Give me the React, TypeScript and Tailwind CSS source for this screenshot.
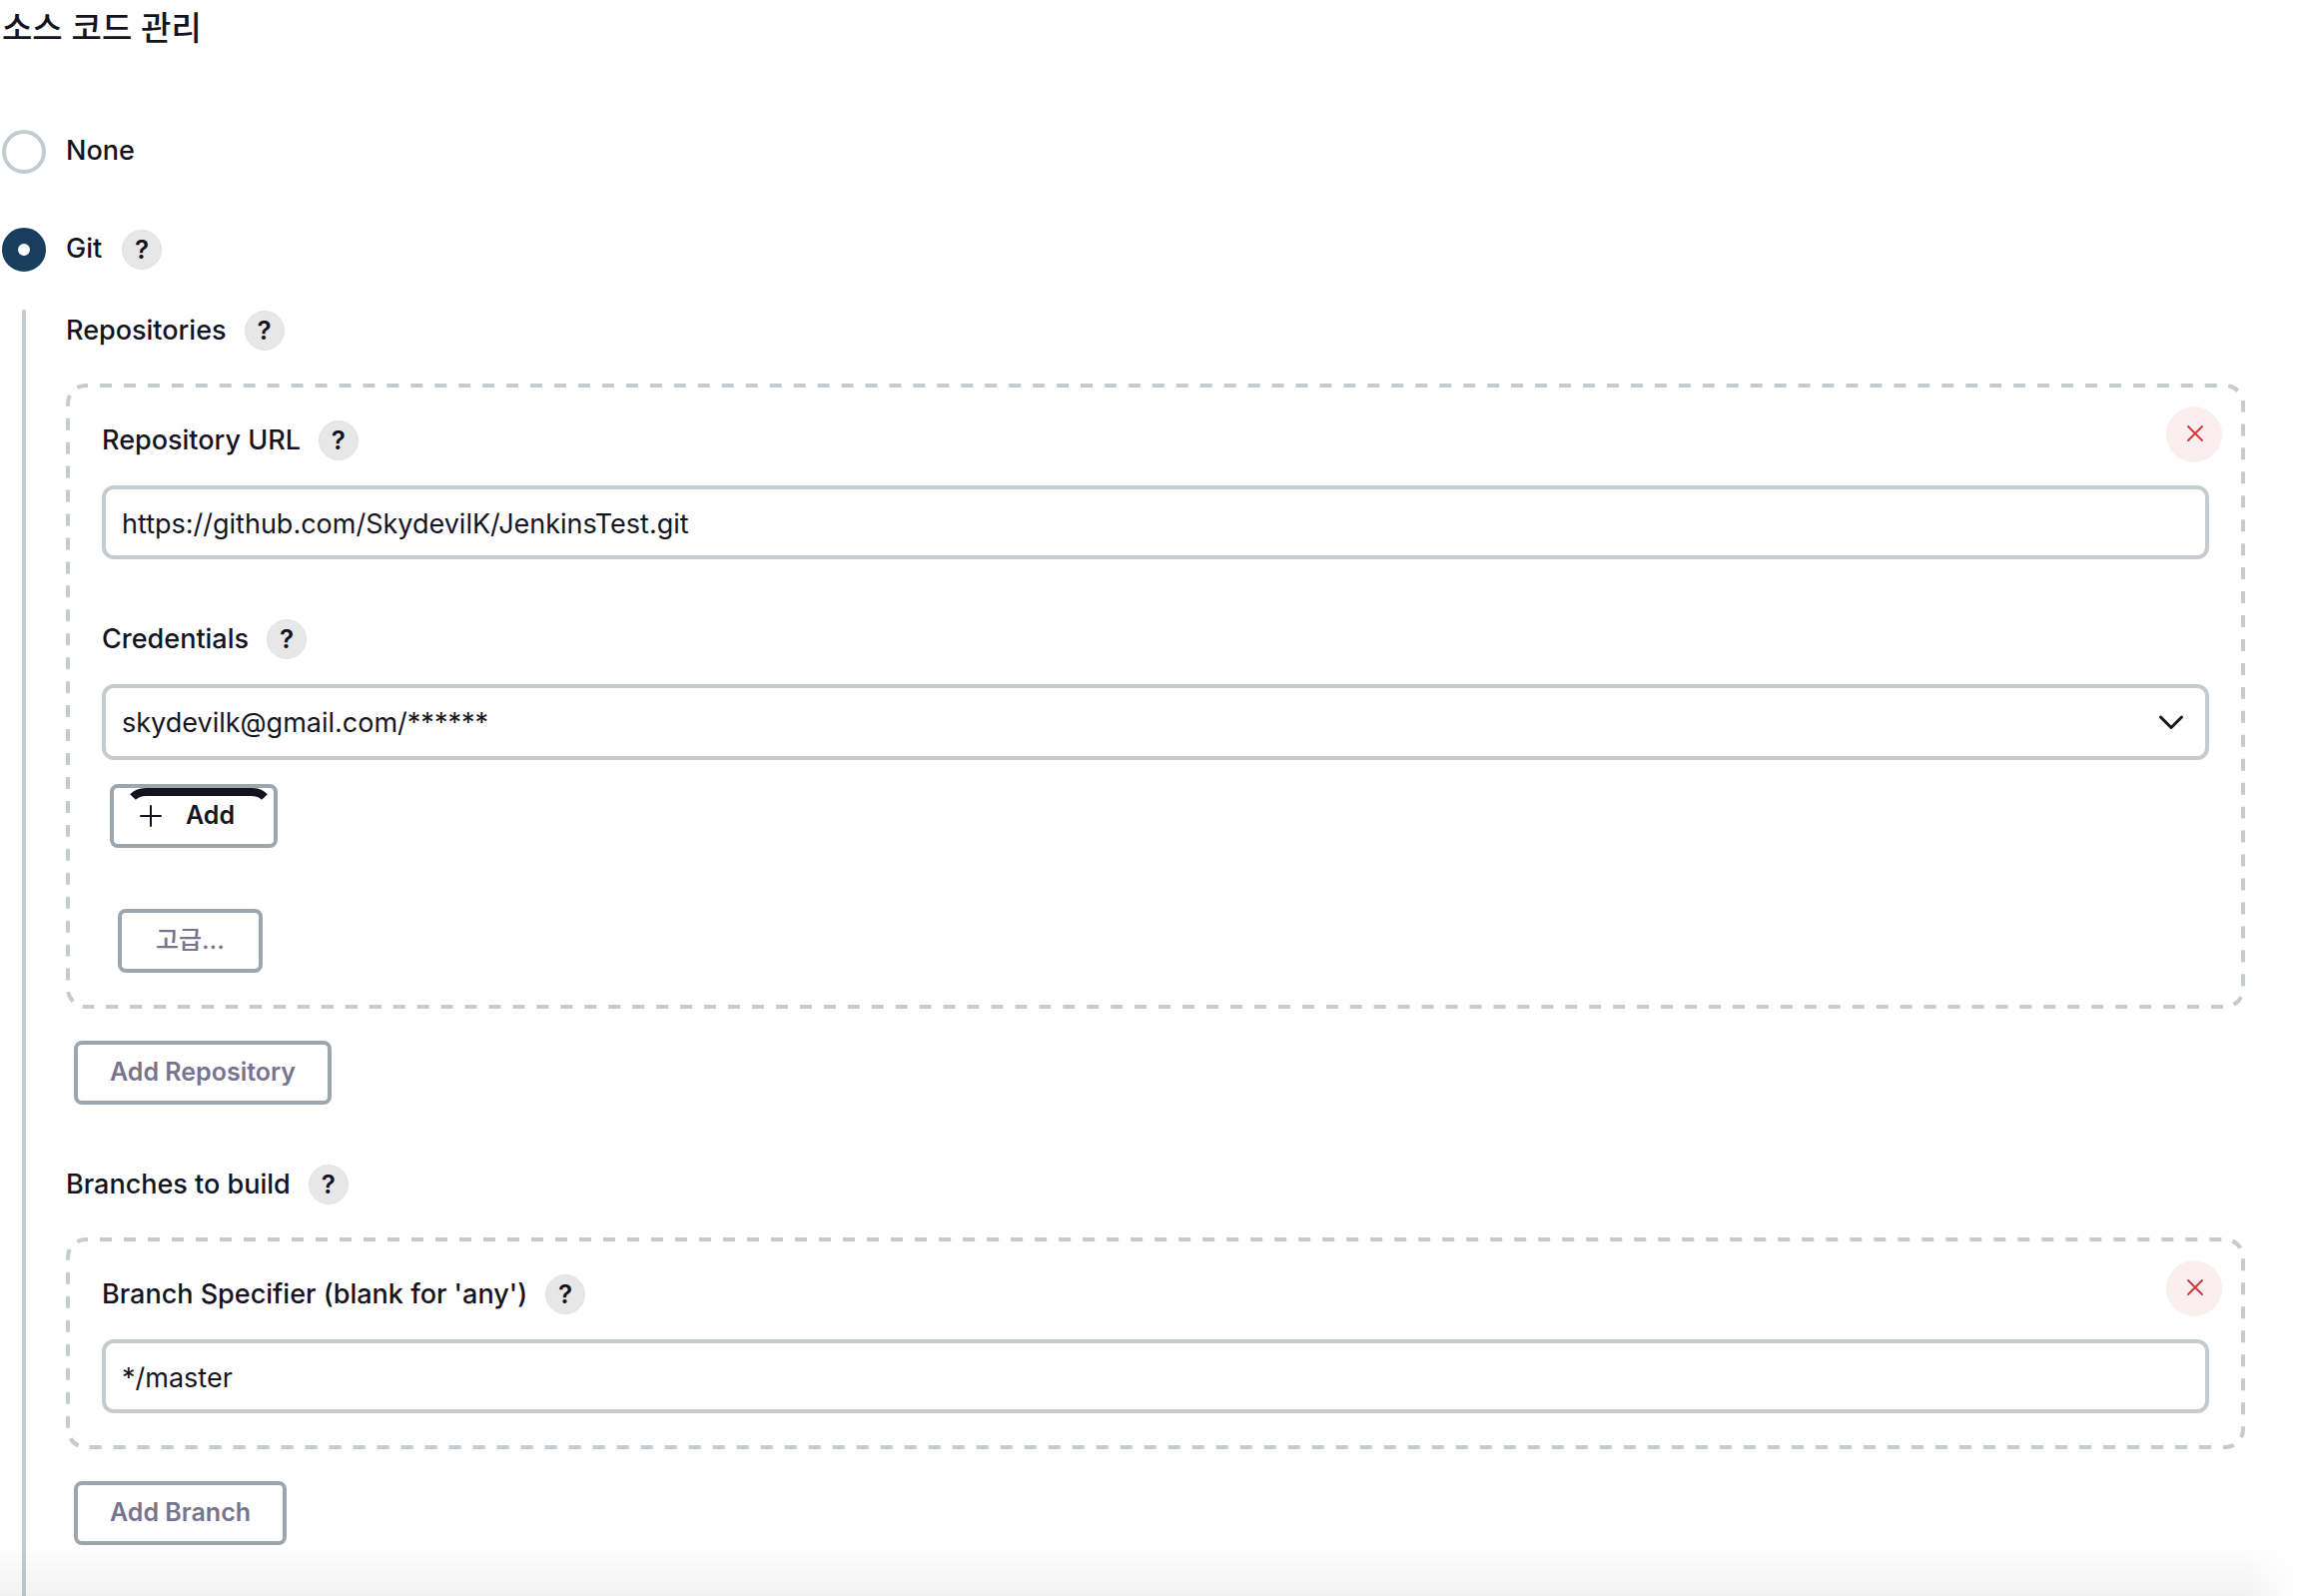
import { useId, useState } from "react";
import type { ReactNode } from "react";

function HelpButton({ topic }: { topic: string }) {
  return (
    <button
      type="button"
      aria-label={`Help for ${topic}`}
      className="flex size-10 shrink-0 items-center justify-center rounded-full border border-[#e2e2e2] bg-[#e7e7e8] text-[26px] leading-10 font-semibold text-[#14141f]"
    >
      ?
    </button>
  );
}

function LabelRow({ children, htmlFor, topic }: { children: ReactNode; htmlFor?: string; topic: string }) {
  return (
    <div className="flex h-[42px] items-center gap-[18px]">
      {htmlFor ? (
        <label htmlFor={htmlFor} className="font-medium">
          {children}
        </label>
      ) : (
        <h2 className="font-medium">{children}</h2>
      )}
      <HelpButton topic={topic} />
    </div>
  );
}

function TextField({ label, initial }: { label: string; initial: string }) {
  const id = useId();
  return (
    <div className="flex flex-col gap-6">
      <LabelRow htmlFor={id} topic={label}>
        {label}
      </LabelRow>
      <input
        id={id}
        type="text"
        defaultValue={initial}
        className="h-[74px] w-full rounded-xl border-4 border-[#c4ccd0] bg-white px-4 pt-0.5 outline-none"
      />
    </div>
  );
}

/* `dashes` is the whole number of dashes spread round the outline, so that the pattern closes without a seam. */
function DashedCard({ children, dashes }: { children: ReactNode; dashes: number }) {
  return (
    <div className="relative p-9">
      <svg aria-hidden="true" className="pointer-events-none absolute inset-0 size-full overflow-hidden rounded-[20px]">
        <rect
          width="100%"
          height="100%"
          rx="20"
          fill="none"
          stroke="#c4ccd0"
          strokeWidth="8"
          pathLength={dashes * 24}
          strokeDasharray="12 12"
          strokeDashoffset="10"
        />
      </svg>
      <button
        type="button"
        aria-label="Delete"
        className="absolute top-[23px] right-[23px] flex size-14 items-center justify-center rounded-full bg-[#fbeeef]"
      >
        <svg viewBox="0 0 18 18" className="mb-0.5 ml-0.5 size-[18px]" fill="none" stroke="#d9363a" strokeWidth="2" strokeLinecap="round">
          <path d="M2 2l14 14M16 2L2 16" />
        </svg>
      </button>
      {children}
    </div>
  );
}

function OutlineButton({ children }: { children: ReactNode }) {
  return (
    <button
      type="button"
      className="h-16 rounded-lg border-4 border-[#9ca7ad] bg-white px-8 pb-0.5 text-[25px] font-semibold text-[#76748f]"
    >
      {children}
    </button>
  );
}

function RadioRow({
  label,
  value,
  selected,
  onSelect,
  help,
}: {
  label: string;
  value: string;
  selected: string;
  onSelect: (v: string) => void;
  help?: boolean;
}) {
  return (
    <div className="flex h-11 items-center gap-5">
      <label className="flex items-center gap-5 font-medium">
        <input
          type="radio"
          name="scm"
          value={value}
          checked={selected === value}
          onChange={() => onSelect(value)}
          className="size-11 appearance-none rounded-full border-4 border-[#c4ccd0] bg-white checked:border-[16px] checked:border-[#1a3f5e]"
        />
        <span className="pb-0.5">{label}</span>
      </label>
      {help && <HelpButton topic={label} />}
    </div>
  );
}

export default function App() {
  const [scm, setScm] = useState("git");
  const credentialsId = useId();

  return (
    <main className="relative flex min-h-screen flex-col bg-white pl-0.5 font-['Inter','Noto_Sans_CJK_KR',sans-serif] text-[27px] leading-[40px] text-[#14141f]">
      <h1 className="h-[130px] pt-2 text-[33px] font-medium">소스 코드 관리</h1>

      <div className="flex flex-col gap-[54px]">
        <RadioRow label="None" value="none" selected={scm} onSelect={setScm} />
        <RadioRow label="Git" value="git" selected={scm} onSelect={setScm} help />
      </div>

      <div className="mt-[38px] flex flex-1 gap-10 pr-[58px] pl-5">
        <div className="w-1 shrink-0 rounded-t-full bg-[#c4ccd0]" />

        <div className="flex min-w-0 flex-1 flex-col pb-[51px]">
          <section className="flex flex-col gap-8">
            <LabelRow topic="Repositories">Repositories</LabelRow>
            <DashedCard dashes={233}>
              <TextField label="Repository URL" initial="https://github.com/SkydevilK/JenkinsTest.git" />

              <div className="mt-[59px] flex flex-col gap-6">
                <LabelRow htmlFor={credentialsId} topic="Credentials">
                  Credentials
                </LabelRow>
                <div className="relative">
                  <select
                    id={credentialsId}
                    className="block h-[76px] w-full appearance-none rounded-xl border-4 border-[#c4ccd0] bg-white px-4 pt-0.5 outline-none"
                  >
                    <option>skydevilk@gmail.com/******</option>
                  </select>
                  <svg
                    aria-hidden="true"
                    viewBox="0 0 28 18"
                    className="pointer-events-none absolute top-[29px] right-6 h-[18px] w-7"
                    fill="none"
                    stroke="#14141f"
                    strokeWidth="3"
                    strokeLinecap="round"
                    strokeLinejoin="round"
                  >
                    <path d="M3.5 4L14 14.500L24.500 4" />
                  </svg>
                </div>
                <div className="pl-2">
                  <button
                    type="button"
                    className="relative flex h-16 w-[168px] items-center rounded-lg border-4 border-[#9ca7ad] bg-white pb-0.5 pl-[26px] text-[25px] font-semibold"
                  >
                    <svg aria-hidden="true" viewBox="0 0 138 12" className="absolute top-0 left-4 h-3 w-[138px]" fill="none" stroke="#14141f" strokeWidth="8">
                      <path d="M3 9Q8 4 16 4H122Q130 4 135 9" />
                    </svg>
                    <svg aria-hidden="true" viewBox="0 0 22 22" className="mt-0.5 size-[22px]" stroke="#14141f" strokeWidth="2" strokeLinecap="round">
                      <path d="M11 1v20M1 11h20" />
                    </svg>
                    <span className="ml-6">Add</span>
                  </button>
                </div>
              </div>

              <div className="mt-[61px] pl-4">
                <OutlineButton>
                  <span className="px-0.5 font-medium">고급...</span>
                </OutlineButton>
              </div>
            </DashedCard>
            <div className="pl-2">
              <OutlineButton>Add Repository</OutlineButton>
            </div>
          </section>

          <section className="mt-[59px] flex flex-col gap-8">
            <LabelRow topic="Branches to build">Branches to build</LabelRow>
            <DashedCard dashes={198}>
              <TextField label="Branch Specifier (blank for 'any')" initial="*/master" />
            </DashedCard>
            <div className="pl-2">
              <OutlineButton>Add Branch</OutlineButton>
            </div>
          </section>
        </div>
      </div>

      <div className="pointer-events-none absolute inset-x-0 bottom-0 h-14 bg-linear-to-b from-black/0 to-black/5 mask-r-from-[calc(100%-58px)] mask-r-to-100%" />
    </main>
  );
}
